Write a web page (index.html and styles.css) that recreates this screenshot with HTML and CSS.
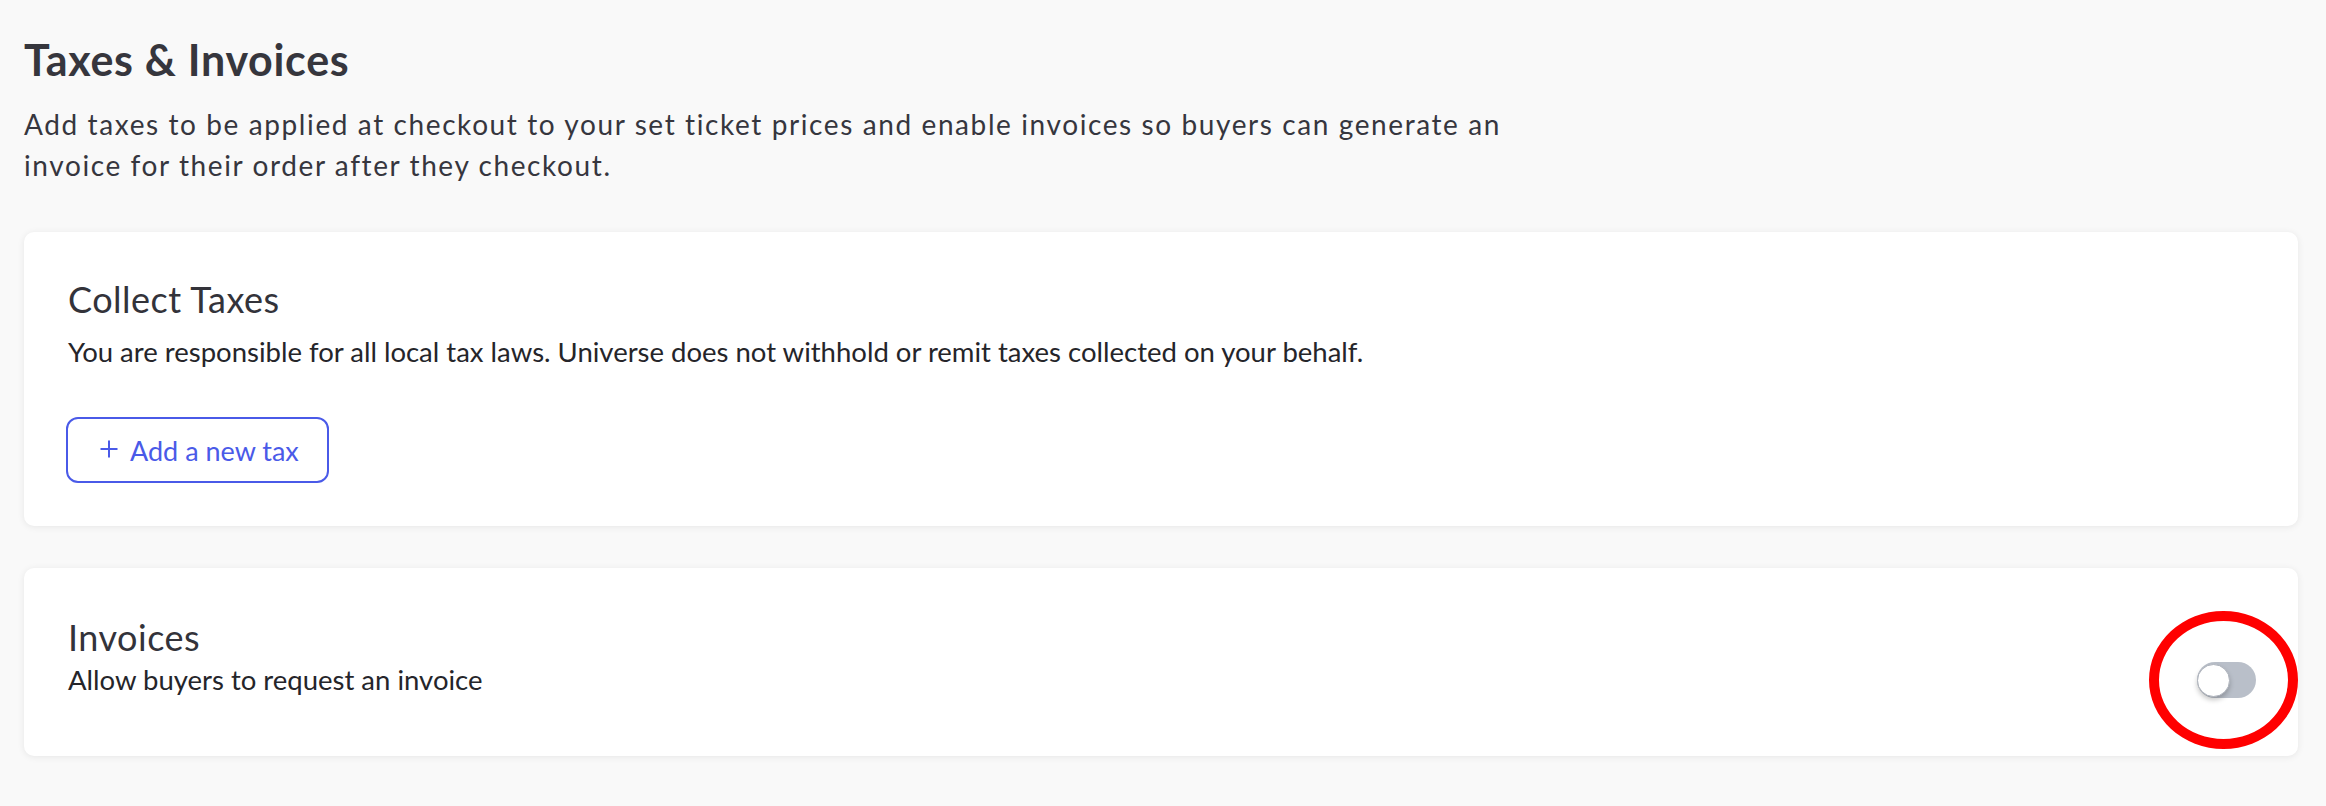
FILE: index.html
```html
<!DOCTYPE html>
<html lang="en">
<head>
<meta charset="utf-8">
<title>Taxes &amp; Invoices</title>
<link rel="stylesheet" href="styles.css">
</head>
<body>
<main class="page">
  <header class="intro">
    <h1 class="page-title">Taxes &amp; Invoices</h1>
    <p class="page-desc">Add taxes to be applied at checkout to your set ticket prices and enable invoices so buyers can generate an invoice for their order after they checkout.</p>
  </header>

  <section class="card card-taxes">
    <h2 class="card-title">Collect Taxes</h2>
    <p class="card-text card-text-spaced">You are responsible for all local tax laws. Universe does not withhold or remit taxes collected on your behalf.</p>
    <button class="btn-outline" type="button">
      <svg class="btn-icon" width="20" height="20" viewBox="0 0 20 20" aria-hidden="true"><path d="M10 1.5v17M1.5 10h17" stroke="currentColor" stroke-width="2" fill="none"/></svg>
      <span>Add a new tax</span>
    </button>
  </section>

  <section class="card card-invoices">
    <div class="card-body">
      <h2 class="card-title">Invoices</h2>
      <p class="card-text">Allow buyers to request an invoice</p>
    </div>
    <div class="toggle" role="switch" aria-checked="false">
      <span class="toggle-knob"></span>
      <span class="annotation"></span>
    </div>
  </section>
</main>
</body>
</html>
```

FILE: styles.css
```css
* { box-sizing: border-box; }

html, body {
  margin: 0;
  padding: 0;
  background: #f9f9f9;
}

body {
  font-family: "Lato", "Liberation Sans", Arial, sans-serif;
  color: #38383f;
}

.page {
  padding: 36px 28px 40px 24px;
}

.page-title {
  margin: 0;
  font-size: 43px;
  line-height: 48px;
  font-weight: 700;
  color: #36363d;
  letter-spacing: 0.7px;
}

.page-desc {
  margin: 20px 0 0;
  max-width: 1520px;
  font-size: 28px;
  line-height: 41px;
  letter-spacing: 1.6px;
  color: #36363e;
}

.card {
  margin-top: 46px;
  background: #ffffff;
  border-radius: 10px;
  box-shadow: 0 1px 7px rgba(0, 0, 0, 0.08);
}

.card-taxes {
  padding: 45px 42px 43px 44px;
}

.card-invoices {
  margin-top: 42px;
  padding: 47px 42px 56px 44px;
  display: flex;
  align-items: flex-start;
  justify-content: space-between;
}

.card-title {
  margin: 0;
  font-size: 36px;
  line-height: 44px;
  font-weight: 400;
  letter-spacing: 0.5px;
  color: #33333a;
}

.card-text {
  margin: 0;
  font-size: 27.5px;
  line-height: 41px;
  color: #25252a;
}

.card-text-spaced {
  margin-top: 10px;
}

.btn-outline {
  margin: 45px 0 0 -2px;
  height: 66px;
  padding: 0 28px 0 31px;
  display: inline-flex;
  align-items: center;
  gap: 11px;
  background: #ffffff;
  border: 2px solid #4a5ae8;
  border-radius: 12px;
  color: #4a5ae8;
  font-family: inherit;
  font-size: 27px;
  cursor: pointer;
}

.btn-icon {
  display: block;
  margin-top: -2px;
}

.toggle {
  position: relative;
  flex: none;
  margin-top: 47px;
  width: 59px;
  height: 36px;
  border-radius: 18px;
  background: #b9bfc9;
}

.toggle-knob {
  position: absolute;
  left: 0;
  top: 1.5px;
  width: 33px;
  height: 33px;
  border-radius: 50%;
  background: #ffffff;
  border: 1px solid #aeb3bc;
  box-shadow: 0 3px 5px rgba(0, 0, 0, 0.22);
}

.annotation {
  position: absolute;
  left: -48px;
  top: -51px;
  width: 149px;
  height: 138px;
  border: 10px solid #ff0000;
  border-radius: 50%;
  pointer-events: none;
}
```
